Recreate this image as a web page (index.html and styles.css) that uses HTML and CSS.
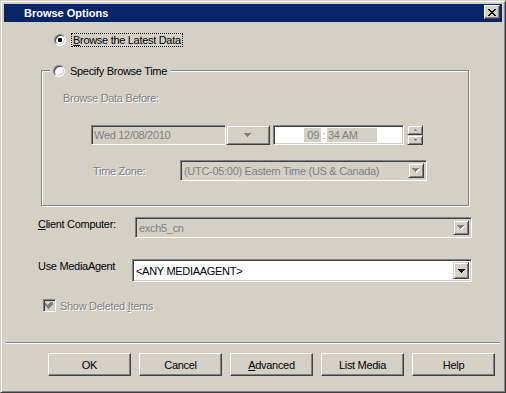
FILE: index.html
```html
<!DOCTYPE html>
<html lang="en">
<head>
    <meta charset="UTF-8">
    <title>Browse Options</title>
    <link rel="stylesheet" href="styles.css">
</head>
<body>

<div class="window">
    <div class="titlebar">
        <span class="title">Browse Options</span>
        <span class="close-btn">
            <svg width="8" height="7" viewBox="0 0 8 7" shape-rendering="crispEdges"><path d="M0 0h2v1h1v1h2v-1h1v-1h2v1h-1v1h-1v1h-1v1h1v1h1v1h1v1h-2v-1h-1v-1h-2v1h-1v1h-2v-1h1v-1h1v-1h1v-1h-1v-1h-1v-1h-1z" fill="#000"/></svg>
        </span>
    </div>

    <div class="dialog">
        <!-- first option -->
        <div class="opt-latest">
            <span class="radio checked"></span>
            <span class="focus-label"><u>B</u>rowse the Latest Data</span>
        </div>

        <!-- specify browse time group -->
        <div class="group">
            <div class="legend">
                <span class="radio"></span>
                <span class="legend-text">Specify Browse Time</span>
            </div>

            <div class="disabled-text before-label">Browse Data Before:</div>

            <div class="date-row">
                <div class="field date-field">Wed 12/08/2010</div>
                <div class="raised date-drop">
                    <svg width="8" height="5" viewBox="0 0 8 5" shape-rendering="crispEdges"><path d="M0 0h7v1h-1v1h-1v1h-1v1h-1v-1h-1v-1h-1v-1h-1z" fill="#808080"/></svg>
                </div>
                <div class="field time-field">
                    <span class="time-part hours">09</span>
                    <span class="time-sep">:</span>
                    <span class="time-part minutes">34 AM</span>
                </div>
                <div class="spin">
                    <div class="raised spin-btn">
                        <svg width="3" height="2" viewBox="0 0 3 2" shape-rendering="crispEdges"><path d="M1 0h1v1h1v1h-3v-1h1z" fill="#808080"/></svg>
                    </div>
                    <div class="raised spin-btn">
                        <svg width="3" height="2" viewBox="0 0 3 2" shape-rendering="crispEdges"><path d="M0 0h3v1h-1v1h-1v-1h-1z" fill="#808080"/></svg>
                    </div>
                </div>
            </div>

            <div class="tz-row">
                <span class="disabled-text tz-label">Time Zone:</span>
                <div class="field combo tz-combo disabled">
                    <span class="combo-text">(UTC-05:00) Eastern Time (US &amp; Canada)</span>
                    <span class="raised combo-btn">
                        <svg width="8" height="5" viewBox="0 0 8 5" shape-rendering="crispEdges"><path d="M1 1h7v1h-1v1h-1v1h-1v1h-1v-1h-1v-1h-1v-1h-1z" fill="#fff"/><path d="M0 0h7v1h-1v1h-1v1h-1v1h-1v-1h-1v-1h-1v-1h-1z" fill="#808080"/></svg>
                    </span>
                </div>
            </div>
        </div>

        <div class="form-row client-row">
            <span class="row-label client-label"><u>C</u>lient Computer:</span>
            <div class="field combo client-combo disabled">
                <span class="combo-text">exch5_cn</span>
                <span class="raised combo-btn">
                    <svg width="8" height="5" viewBox="0 0 8 5" shape-rendering="crispEdges"><path d="M1 1h7v1h-1v1h-1v1h-1v1h-1v-1h-1v-1h-1v-1h-1z" fill="#fff"/><path d="M0 0h7v1h-1v1h-1v1h-1v1h-1v-1h-1v-1h-1v-1h-1z" fill="#808080"/></svg>
                </span>
            </div>
        </div>

        <div class="form-row media-row">
            <span class="row-label media-label">Use MediaAgent</span>
            <div class="field combo media-combo">
                <span class="combo-text">&lt;ANY MEDIAAGENT&gt;</span>
                <span class="raised combo-btn">
                    <svg width="7" height="4" viewBox="0 0 7 4" shape-rendering="crispEdges"><path d="M0 0h7v1h-1v1h-1v1h-1v1h-1v-1h-1v-1h-1v-1h-1z" fill="#000"/></svg>
                </span>
            </div>
        </div>

        <div class="check-row">
            <span class="checkbox">
                <svg width="9" height="9" viewBox="0 0 9 9" shape-rendering="crispEdges"><path d="M7 1h1v3h-1v1h-1v1h-1v1h-1v1h-1v-1h-1v-1h-1v-1h-1v-3h1v1h1v1h1v-1h1v-1h1v-1h1z" fill="#808080"/></svg>
            </span>
            <span class="disabled-text">Show Deleted <u>I</u>tems</span>
        </div>

        <div class="separator"></div>

        <div class="buttons">
            <button class="btn">OK</button>
            <button class="btn">Cancel</button>
            <button class="btn"><span><u>A</u>dvanced</span></button>
            <button class="btn">List Media</button>
            <button class="btn">Help</button>
        </div>
    </div>
</div>

</body>
</html>
```

FILE: styles.css
```css
body {
    margin: 0;
    font-family: "Liberation Sans", Arial, sans-serif;
    font-size: 11px;
    letter-spacing: -0.3px;
    color: #000;
    background: #d4d0c8;
}
u {
    text-underline-offset: 1px;
}

/* window frame */
.window {
    width: 506px;
    height: 393px;
    box-sizing: border-box;
    background: #d4d0c8;
    border: 1px solid;
    border-color: #d4d0c8 #404040 #404040 #d4d0c8;
    box-shadow: inset 1px 1px #fff, inset -1px -1px #808080;
    padding: 3px;
}
.titlebar {
    height: 18px;
    background: #0a246a;
    display: flex;
    align-items: center;
    justify-content: space-between;
    padding: 0 2px 0 20px;
}
.title {
    color: #fff;
    font-weight: bold;
    letter-spacing: 0;
}
.close-btn {
    width: 16px;
    height: 14px;
    box-sizing: border-box;
    align-self: flex-start;
    margin-top: 1px;
    background: #d4d0c8;
    border: 1px solid;
    border-color: #fff #404040 #404040 #fff;
    box-shadow: inset -1px -1px #808080;
    display: flex;
    align-items: center;
    justify-content: center;
}

/* common controls */
.radio {
    width: 12px;
    height: 12px;
    box-sizing: border-box;
    flex: none;
    border-radius: 50%;
    background: #fff;
    border: 1px solid;
    border-color: #808080 #fff #fff #808080;
    box-shadow: inset 1px 1px #404040, inset -1px -1px #d4d0c8;
    display: flex;
    align-items: center;
    justify-content: center;
}
.radio.checked::after {
    content: "";
    width: 4px;
    height: 4px;
    border-radius: 1px;
    background: #000;
}
.field {
    box-sizing: border-box;
    border: 1px solid;
    border-color: #808080 #fff #fff #808080;
    box-shadow: inset 1px 1px #404040, inset -1px -1px #d4d0c8;
    padding: 2px;
    background: #fff;
    display: flex;
    align-items: center;
}
.field.disabled {
    background: #d4d0c8;
    color: #808080;
}
.raised {
    box-sizing: border-box;
    background: #d4d0c8;
    border: 1px solid;
    border-color: #d4d0c8 #404040 #404040 #d4d0c8;
    box-shadow: inset 1px 1px #fff, inset -1px -1px #808080;
    display: flex;
    align-items: center;
    justify-content: center;
}
.disabled-text {
    color: #808080;
    text-shadow: 1px 1px 0 #fff;
}

/* top option */
.opt-latest {
    display: flex;
    align-items: center;
    height: 14px;
    margin: 11px 0 0 50px;
}
.focus-label {
    margin-left: 5px;
    border: 1px dotted #000;
    padding: 0 1px;
    line-height: 12px;
}

/* group box */
.group {
    margin: 23px 0 0 37px;
    width: 428px;
    height: 136px;
    box-sizing: border-box;
    border: 1px solid #808080;
    box-shadow: inset 1px 1px #fff, 1px 1px #fff;
}
.legend {
    display: flex;
    align-items: center;
    width: fit-content;
    height: 12px;
    margin: -6px 0 0 8px;
    padding: 0 4px 0 3px;
    background: #d4d0c8;
}
.legend-text {
    margin-left: 5px;
}
.before-label {
    margin: 15px 0 0 21px;
    height: 13px;
    line-height: 13px;
}
.date-row {
    display: flex;
    height: 20px;
    margin: 20px 0 0 49px;
}
.date-field {
    width: 135px;
    background: #d4d0c8;
    color: #808080;
    padding-left: 2px;
}
.date-drop {
    width: 44px;
}
.time-field {
    width: 131px;
    margin-left: 3px;
    color: #808080;
    align-items: stretch;
}
.time-part {
    background: #d4d0c8;
    display: flex;
    align-items: center;
}
.hours {
    margin-left: 28px;
    width: 17px;
    justify-content: flex-end;
    padding-right: 2px;
    box-sizing: border-box;
}
.time-sep {
    width: 6px;
    display: flex;
    align-items: center;
    justify-content: center;
}
.minutes {
    width: 50px;
    padding-left: 1px;
    box-sizing: border-box;
}
.spin {
    margin-left: 3px;
    width: 16px;
    display: flex;
    flex-direction: column;
}
.spin-btn {
    height: 10px;
}
.tz-row {
    display: flex;
    align-items: center;
    height: 21px;
    margin: 15px 0 0 51px;
}
.tz-label {
    width: 87px;
}
.combo {
    padding: 2px;
}
.combo-text {
    flex: 1;
    padding-left: 1px;
    white-space: nowrap;
    overflow: hidden;
}
.combo-btn {
    width: 16px;
    align-self: stretch;
}
.tz-combo {
    width: 247px;
    height: 21px;
}

/* lower rows */
.form-row {
    display: flex;
    align-items: flex-start;
    margin-left: 34px;
}
.row-label {
    line-height: 13px;
    padding-top: 1px;
}
.client-row {
    margin-top: 11px;
}
.client-label {
    width: 97px;
}
.client-combo {
    width: 337px;
    height: 21px;
}
.media-row {
    margin-top: 21px;
}
.media-label {
    width: 94px;
    padding-top: 1px;
}
.media-combo {
    width: 340px;
    height: 23px;
}
.check-row {
    display: flex;
    align-items: center;
    height: 13px;
    margin: 17px 0 0 39px;
}
.checkbox {
    width: 13px;
    height: 13px;
    box-sizing: border-box;
    margin-right: 4px;
    border: 1px solid;
    border-color: #808080 #fff #fff #808080;
    box-shadow: inset 1px 1px #404040, inset -1px -1px #d4d0c8;
    background: #d4d0c8;
    display: flex;
    align-items: center;
    justify-content: center;
}
.separator {
    margin: 30px 0 0 2px;
    width: 494px;
    border-top: 1px solid #808080;
    border-bottom: 1px solid #fff;
}
.buttons {
    display: flex;
    gap: 8px;
    margin: 9px 0 0 44px;
}
.btn {
    width: 83px;
    height: 23px;
    box-sizing: border-box;
    padding: 0;
    font: inherit;
    letter-spacing: inherit;
    color: #000;
    background: #d4d0c8;
    border: 1px solid;
    border-color: #fff #404040 #404040 #fff;
    box-shadow: inset -1px -1px #808080;
    display: flex;
    align-items: center;
    justify-content: center;
}
```
